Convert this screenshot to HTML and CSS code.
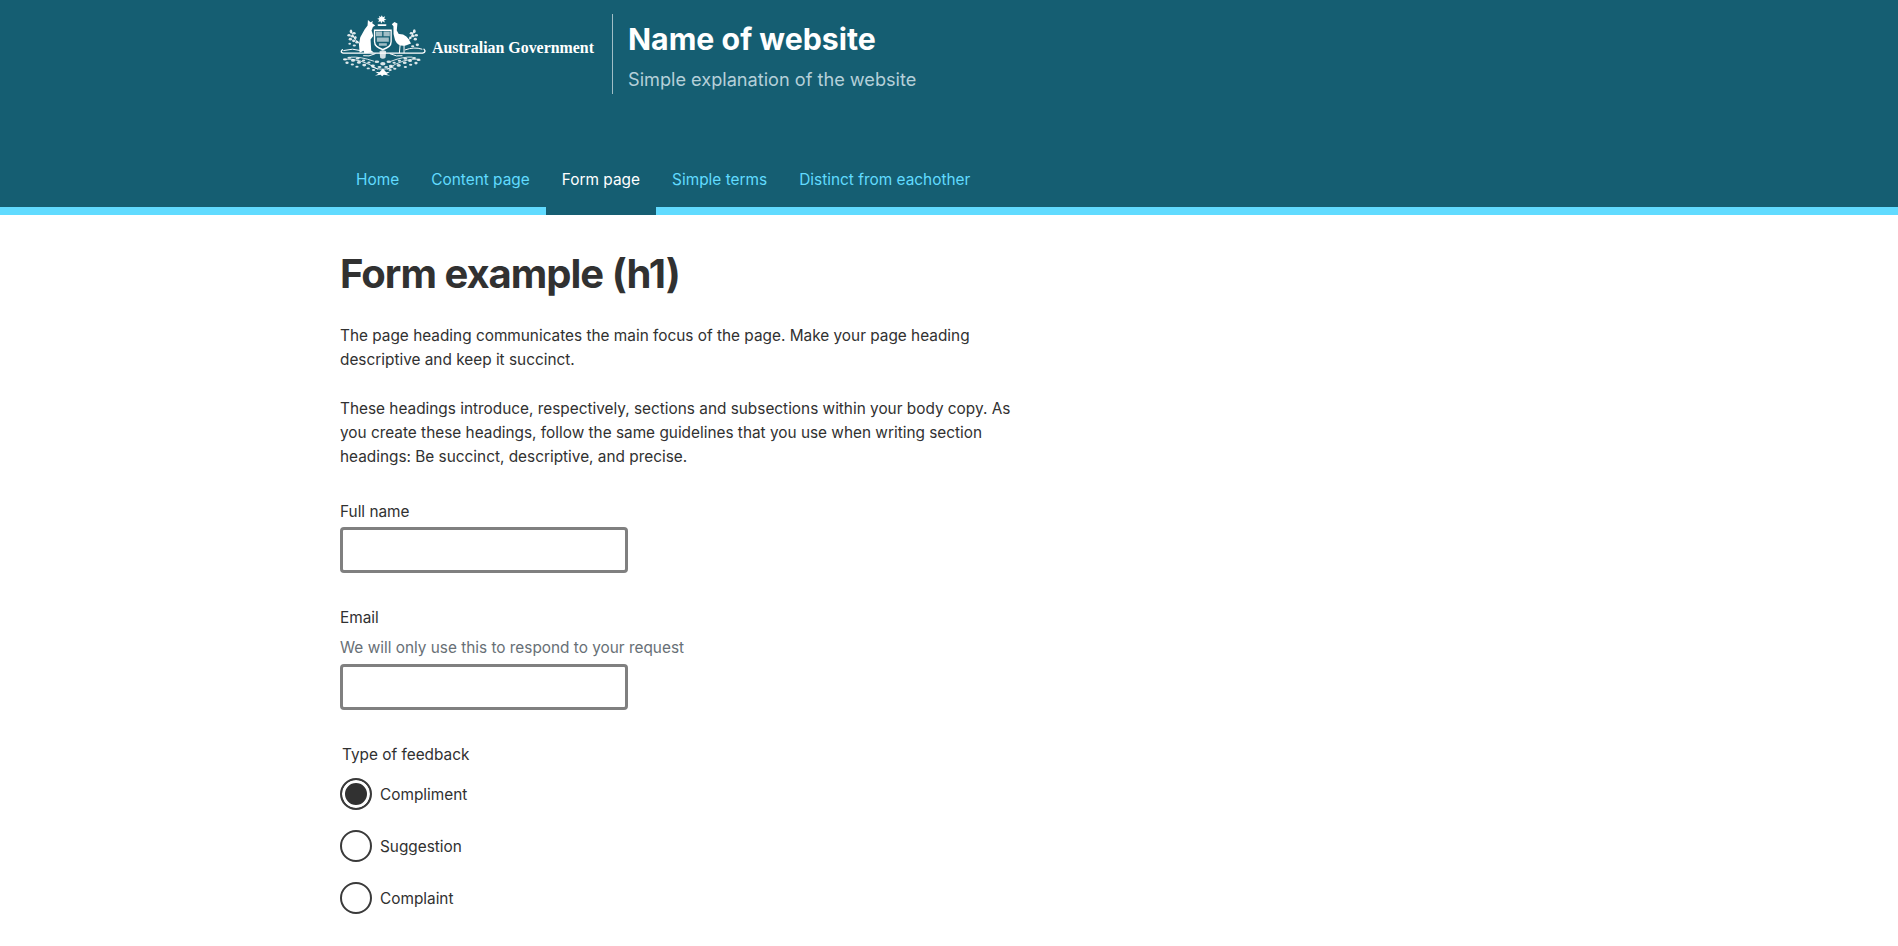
FILE: index.html
```html
<!DOCTYPE html>
<html lang="en">
<head>
<meta charset="utf-8">
<title>Form example</title>
<link rel="stylesheet" href="styles.css">
</head>
<body>
<header class="site-header">
  <div class="container">
    <div class="brand">
      <div class="gov-logo">
        <svg class="crest" viewBox="30 40 260 190" aria-hidden="true">
          <g fill="#fff">
            <polygon points="155,44 158,50 165,47 162,54 169,56 162,59 164,66 157,62 153,69 151,62 144,64 147,57 141,54 148,52 146,46 152,49"/>
            <rect x="142" y="71" width="27" height="5" rx="2.5"/>
            <path d="M113 58 L121 65 L128 61 L126 68 L135 75 L128 79 L124 90 L129 106 L121 117 L123 150 L131 156 L102 158 L100 151 L88 157 L86 131 L90 110 L103 87 L112 75 Z"/>
            <path d="M185 71 L193 64 L202 69 L200 90 L206 100 Q232 99 243 129 L227 135 Q204 139 195 119 Q188 100 190 77 Z"/>
            <path d="M131 87 H185 V124 Q185 142 158 150 Q131 142 131 124 Z M135 91 V123 Q135 137 158 145 Q181 137 181 123 V91 Z"/>
            <path d="M137 93 H156 V107 H137 Z M160 93 H179 V107 H160 Z M140 111 H176 V124 H140 Z M146 128 H170 V136 H146 Z" opacity=".6"/>
            <path d="M148 152 Q158 146 168 152 L166 172 Q158 178 150 172 Z" opacity=".8"/>
            <path d="M158 204 L168 216 L180 214 L169 221 L180 226 L161 223 L156 228 L151 223 L134 226 L145 220 L135 214 L148 216 Z"/>
            <g opacity=".85">
              <ellipse cx="62" cy="93" rx="4" ry="6"/><ellipse cx="71" cy="98" rx="5" ry="4"/><ellipse cx="56" cy="104" rx="5" ry="4"/><ellipse cx="66" cy="107" rx="5" ry="4"/><ellipse cx="75" cy="111" rx="4" ry="5"/><ellipse cx="60" cy="116" rx="5" ry="4"/><ellipse cx="70" cy="121" rx="5" ry="4"/><ellipse cx="80" cy="125" rx="5" ry="4"/><ellipse cx="58" cy="130" rx="4" ry="3"/><ellipse cx="72" cy="135" rx="5" ry="3"/>
              <ellipse cx="253" cy="92" rx="4" ry="6"/><ellipse cx="244" cy="98" rx="5" ry="4"/><ellipse cx="259" cy="104" rx="5" ry="4"/><ellipse cx="249" cy="106" rx="5" ry="4"/><ellipse cx="241" cy="112" rx="4" ry="4"/><ellipse cx="256" cy="116" rx="5" ry="4"/><ellipse cx="262" cy="133" rx="5" ry="4"/><ellipse cx="248" cy="137" rx="5" ry="3"/>
              <ellipse cx="44" cy="177" rx="6" ry="3"/><ellipse cx="57" cy="172" rx="6" ry="3"/><ellipse cx="50" cy="187" rx="5" ry="4"/><ellipse cx="68" cy="180" rx="6" ry="4"/><ellipse cx="66" cy="192" rx="5" ry="3"/><ellipse cx="82" cy="174" rx="6" ry="3"/><ellipse cx="86" cy="186" rx="6" ry="4"/><ellipse cx="80" cy="199" rx="5" ry="3"/><ellipse cx="100" cy="180" rx="5" ry="3"/><ellipse cx="102" cy="194" rx="6" ry="4"/><ellipse cx="116" cy="186" rx="5" ry="3"/><ellipse cx="114" cy="204" rx="5" ry="3"/><ellipse cx="128" cy="196" rx="6" ry="4"/><ellipse cx="130" cy="209" rx="5" ry="3"/>
              <ellipse cx="266" cy="179" rx="6" ry="3"/><ellipse cx="252" cy="173" rx="6" ry="3"/><ellipse cx="258" cy="188" rx="5" ry="4"/><ellipse cx="240" cy="181" rx="6" ry="4"/><ellipse cx="242" cy="193" rx="5" ry="3"/><ellipse cx="226" cy="175" rx="6" ry="3"/><ellipse cx="224" cy="187" rx="6" ry="4"/><ellipse cx="226" cy="200" rx="5" ry="3"/><ellipse cx="208" cy="181" rx="5" ry="3"/><ellipse cx="206" cy="195" rx="6" ry="4"/><ellipse cx="192" cy="187" rx="5" ry="3"/><ellipse cx="194" cy="205" rx="5" ry="3"/><ellipse cx="182" cy="197" rx="6" ry="4"/><ellipse cx="180" cy="209" rx="5" ry="3"/>
              <ellipse cx="140" cy="184" rx="7" ry="4"/><ellipse cx="158" cy="190" rx="8" ry="5"/><ellipse cx="176" cy="184" rx="7" ry="4"/><ellipse cx="148" cy="200" rx="6" ry="3"/><ellipse cx="168" cy="200" rx="6" ry="3"/>
            </g>
          </g>
          <g fill="none" stroke="#fff" stroke-linecap="round">
            <path stroke-width="4" d="M36 148 Q28 156 38 158 L278 158 Q290 154 282 146"/>
            <path stroke-width="3" d="M40 150 Q68 142 90 150 M226 148 Q252 138 276 146"/>
            <path stroke-width="2.5" d="M63 92 Q68 115 88 130 M252 90 Q246 112 226 128"/>
            <path stroke-width="2.5" d="M40 176 Q90 172 142 206 M268 176 Q220 172 172 206"/>
            <path stroke-width="2.5" d="M62 170 Q90 168 130 182 M246 170 Q220 168 184 182"/>
            <path stroke-width="3" d="M210 134 L208 157 M222 134 L222 157 M135 160 Q115 170 100 166 M180 160 Q200 170 216 166"/>
            <path stroke-width="2.5" d="M125 200 Q158 214 190 200"/>
          </g>
        </svg>
        <span class="gov-name">Australian Government</span>
      </div>
      <div class="site-id">
        <div class="site-name">Name of website</div>
        <div class="site-tagline">Simple explanation of the website</div>
      </div>
    </div>
    <nav class="main-nav">
      <a class="nav-link" href="#">Home</a>
      <a class="nav-link" href="#">Content page</a>
      <a class="nav-link is-active" href="#">Form page</a>
      <a class="nav-link" href="#">Simple terms</a>
      <a class="nav-link" href="#">Distinct from eachother</a>
    </nav>
  </div>
</header>
<main class="container content">
  <h1 class="page-title">Form example (h1)</h1>
  <p class="copy">The page heading communicates the main focus of the page. Make your page heading descriptive and keep it succinct.</p>
  <p class="copy">These headings introduce, respectively, sections and subsections within your body copy. As you create these headings, follow the same guidelines that you use when writing section headings: Be succinct, descriptive, and precise.</p>
  <form class="form">
    <div class="field">
      <label class="field-label" for="name">Full name</label>
      <input class="text-input" id="name" type="text">
    </div>
    <div class="field">
      <label class="field-label" for="email">Email</label>
      <div class="field-hint">We will only use this to respond to your request</div>
      <input class="text-input" id="email" type="email">
    </div>
    <fieldset class="radio-group">
      <legend class="radio-legend">Type of feedback</legend>
      <label class="radio-row"><input class="radio" type="radio" name="type" checked><span class="radio-text">Compliment</span></label>
      <label class="radio-row"><input class="radio" type="radio" name="type"><span class="radio-text">Suggestion</span></label>
      <label class="radio-row"><input class="radio" type="radio" name="type"><span class="radio-text">Complaint</span></label>
    </fieldset>
  </form>
</main>
</body>
</html>
```
FILE: styles.css
```css
* { box-sizing: border-box; }
html, body { margin: 0; padding: 0; }
body {
  background: #fff;
  color: #313131;
  font-family: Inter, "Liberation Sans", sans-serif;
  font-size: 15.36px;
  line-height: 24px;
  overflow-x: hidden;
}
.container { width: 1218px; margin: 0 auto; }
.site-header { background: #155e72; border-bottom: 8px solid #61dbff; }
.brand { display: flex; align-items: flex-start; padding-top: 14px; }
.gov-logo { display: flex; align-items: flex-start; width: 272px; }
.crest { width: 87px; height: 63px; flex: none; display: block; margin-right: 5px; }
.gov-name {
  font-family: "Liberation Serif", serif;
  font-weight: 700;
  font-size: 15.9px;
  line-height: 20px;
  color: #fff;
  white-space: nowrap;
  margin-top: 24px;
}
.site-id {
  height: 80px;
  border-left: 1px solid rgba(255, 255, 255, .6);
  padding-left: 15px;
}
.site-name { font-size: 30.3px; font-weight: 700; line-height: 36px; color: #fff; margin-top: 7px; }
.site-tagline { font-size: 18.15px; line-height: 24px; color: #b5d0d9; margin-top: 10px; }
.main-nav { display: flex; margin-top: 57px; margin-bottom: -8px; }
.nav-link {
  display: block;
  padding: 17px 16px 23px;
  color: #61dbff;
  text-decoration: none;
  font-size: 15.42px;
  line-height: 24px;
}
.nav-link.is-active { background: #155e72; color: #fff; }
.content { padding-top: 36px; padding-bottom: 20px; }
.page-title { margin: 0 0 27px; font-size: 40px; line-height: 46px; font-weight: 700; letter-spacing: -1px; color: #313131; }
.copy { margin: 0 0 25px; width: 680px; }
.form { margin-top: 30px; }
.field { margin-bottom: 32px; }
.field-label { display: block; padding-top: 1px; margin-bottom: 3px; }
.field-hint { color: #687076; margin: 6px 0 4px; }
.text-input {
  display: block;
  width: 288px;
  height: 46px;
  border: 3px solid #808080;
  border-radius: 4px;
  background: #fff;
  padding: 0 8px;
  font: inherit;
}
.radio-group { border: 0; margin: 0; padding: 0; min-width: 0; display: flex; flex-direction: column; gap: 20px; }
.radio-legend { padding: 1px 2px 0; margin-bottom: 11px; }
.radio-row { display: flex; align-items: center; gap: 8px; height: 32px; }
.radio-text { padding-top: 2px; }
.radio {
  appearance: none;
  margin: 0;
  width: 32px;
  height: 32px;
  border: 2px solid #3a3a3a;
  border-radius: 50%;
  background: #fff;
  flex: none;
}
.radio:checked { background: #313131; box-shadow: inset 0 0 0 3px #fff; }
```
